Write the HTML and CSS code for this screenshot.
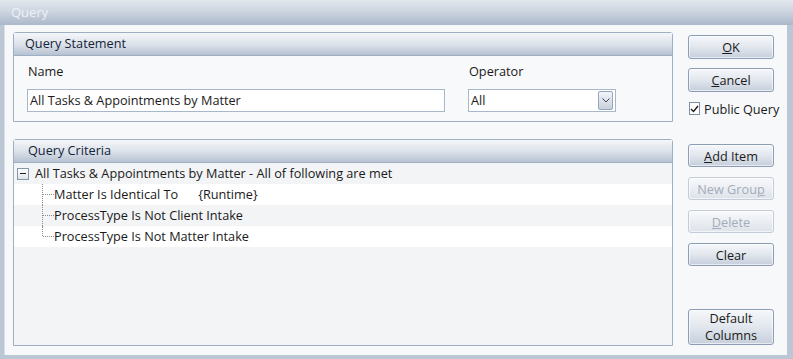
FILE: index.html
```html
<!DOCTYPE html>
<html lang="en">
<head>
  <meta charset="UTF-8">
  <title>Query</title>
  <link rel="stylesheet" href="styles.css">
</head>
<body>

<div class="window">
  <div class="titlebar">Query</div>
  <div class="client">

    <div class="main">
      <div class="group statement">
        <div class="group-head">Query Statement</div>
        <div class="statement-body">
          <div class="field name-field">
            <label>Name</label>
            <div class="textbox">All Tasks &amp; Appointments by Matter</div>
          </div>
          <div class="field op-field">
            <label>Operator</label>
            <div class="textbox combo">
              <span>All</span>
              <span class="drop">
                <svg width="8" height="5" viewBox="0 0 8 5"><path d="M0.5 0.5 L4 4 L7.5 0.5" fill="none" stroke="#3a4656" stroke-width="1"/></svg>
              </span>
            </div>
          </div>
        </div>
      </div>

      <div class="group criteria">
        <div class="group-head">Query Criteria</div>
        <div class="tree">
          <div class="row root">
            <span class="minus"><i></i></span>
            <span>All Tasks &amp; Appointments by Matter - All of following are met</span>
          </div>
          <div class="row child alt">
            <span class="branch"></span>
            <span>Matter Is Identical To</span>
            <span class="value">{Runtime}</span>
          </div>
          <div class="row child">
            <span class="branch"></span>
            <span>ProcessType Is Not Client Intake</span>
          </div>
          <div class="row child alt last">
            <span class="branch"></span>
            <span>ProcessType Is Not Matter Intake</span>
          </div>
        </div>
      </div>
    </div>

    <div class="side">
      <button class="btn ok"><u>O</u>K</button>
      <button class="btn cancel"><u>C</u>ancel</button>
      <div class="check">
        <span class="box">
          <svg width="9" height="8" viewBox="0 0 9 8"><path d="M1 4 L3.5 6.5 L8 1" fill="none" stroke="#1a1a1a" stroke-width="1.4"/></svg>
        </span>
        Public Query
      </div>
      <button class="btn add"><u>A</u>dd Item</button>
      <button class="btn small" disabled>New Grou<u>p</u></button>
      <button class="btn small" disabled><u>D</u>elete</button>
      <button class="btn small">Clear</button>
      <button class="btn columns"><span>Default</span><span>Columns</span></button>
    </div>

  </div>
</div>

</body>
</html>
```

FILE: styles.css
```css
body {
  margin: 0;
  font-family: "Open Sans", "Noto Sans", sans-serif;
  font-size: 12.7px;
  color: #1a1a1a;
}
.window {
  width: 793px;
  height: 359px;
  display: flex;
  flex-direction: column;
  background: #bcc7d6;
}
.titlebar {
  height: 25px;
  line-height: 25px;
  padding-left: 11px;
  color: #eef1f5;
  font-size: 13px;
  background: linear-gradient(#e3e8ee, #cdd5e0 45%, #abb8ca);
  flex-shrink: 0;
}
.client {
  flex: 1;
  display: flex;
  margin: 0 6px 4px 4px;
  padding: 7px 0 0 8px;
  background: #f7f8fa;
  border-left: 1px solid #d9dfe7;
}
.main {
  width: 660px;
  display: flex;
  flex-direction: column;
}
.group {
  border: 1px solid #9eaec3;
  border-radius: 3px 3px 0 0;
}
.group-head {
  height: 22px;
  line-height: 21px;
  padding-left: 11px;
  color: #152238;
  background: linear-gradient(#f4f6f9, #dde3eb 50%, #b7c2d2);
  border-bottom: 1px solid #9eaec3;
}
.criteria .group-head {
  padding-left: 14px;
}
.statement {
  height: 88px;
  background: #f8f9fb;
}
.statement-body {
  display: flex;
  padding: 7px 0 0 13px;
}
.field label {
  display: block;
  height: 17px;
  line-height: 17px;
  margin: 0 0 9px 1px;
}
.name-field .textbox {
  width: 414px;
}
.op-field {
  margin-left: 23px;
}
.textbox {
  height: 21px;
  line-height: 21px;
  padding-left: 2px;
  background: #fff;
  border: 1px solid #a8b7ca;
}
.combo {
  width: 144px;
  display: flex;
  justify-content: space-between;
}
.drop {
  width: 13px;
  height: 17px;
  margin: 1px 2px 0 0;
  border: 1px solid #95a5bb;
  border-radius: 2px;
  background: linear-gradient(#f3f5f8, #c8d0dc);
  display: flex;
  align-items: center;
  justify-content: center;
}
.criteria {
  margin-top: 17px;
  height: 205px;
  display: flex;
  flex-direction: column;
}
.tree {
  flex: 1;
  background: #f3f4f6;
}
.row {
  height: 21px;
  line-height: 19px;
  display: flex;
  align-items: center;
}
.row.alt {
  background: #fff;
}
.root {
  padding-left: 3px;
}
.minus {
  width: 10px;
  height: 10px;
  margin-right: 6px;
  border: 1px solid #8696ad;
  background: linear-gradient(#fff, #dfe4ea);
  display: flex;
  align-items: center;
  justify-content: center;
}
.minus i {
  width: 6px;
  height: 1px;
  background: #222;
}
.child {
  padding-left: 28px;
}
.branch {
  position: relative;
  align-self: stretch;
  width: 11px;
  border-left: 1px dotted #8c8c8c;
}
.branch::after {
  content: "";
  position: absolute;
  left: 0;
  top: 10px;
  width: 11px;
  border-top: 1px dotted #8c8c8c;
}
.last .branch {
  align-self: flex-start;
  height: 10px;
}
.value {
  margin-left: 20px;
}
.side {
  width: 86px;
  margin-left: 15px;
  display: flex;
  flex-direction: column;
}
.btn {
  width: 86px;
  height: 24px;
  padding: 0;
  font: inherit;
  color: #1a1a1a;
  border: 1px solid #8d9db5;
  border-radius: 3px;
  background: linear-gradient(#f5f7fa, #e2e7ee 50%, #c5cedb);
  box-shadow: inset 0 0 0 1px rgba(255, 255, 255, 0.6);
}
.btn:disabled {
  color: #a3acba;
  border-color: #c3ccd8;
  background: linear-gradient(#f8f9fb, #ebeef3 50%, #dde2e9);
}
.ok {
  margin-top: 3px;
}
.cancel {
  margin-top: 9px;
}
.check {
  margin-top: 10px;
  height: 13px;
  display: flex;
  align-items: center;
  white-space: nowrap;
}
.box {
  width: 11px;
  height: 11px;
  margin: 0 4px 0 1px;
  border: 1px solid #7f8ea4;
  background: #fff;
  display: flex;
  align-items: center;
  justify-content: center;
}
.add {
  margin-top: 29px;
  height: 23px;
}
.small {
  margin-top: 10px;
  height: 23px;
}
.columns {
  margin-top: 43px;
  height: 36px;
  display: flex;
  flex-direction: column;
  align-items: center;
  justify-content: center;
}
.columns span {
  display: block;
  height: 17px;
  line-height: 17px;
}
```
